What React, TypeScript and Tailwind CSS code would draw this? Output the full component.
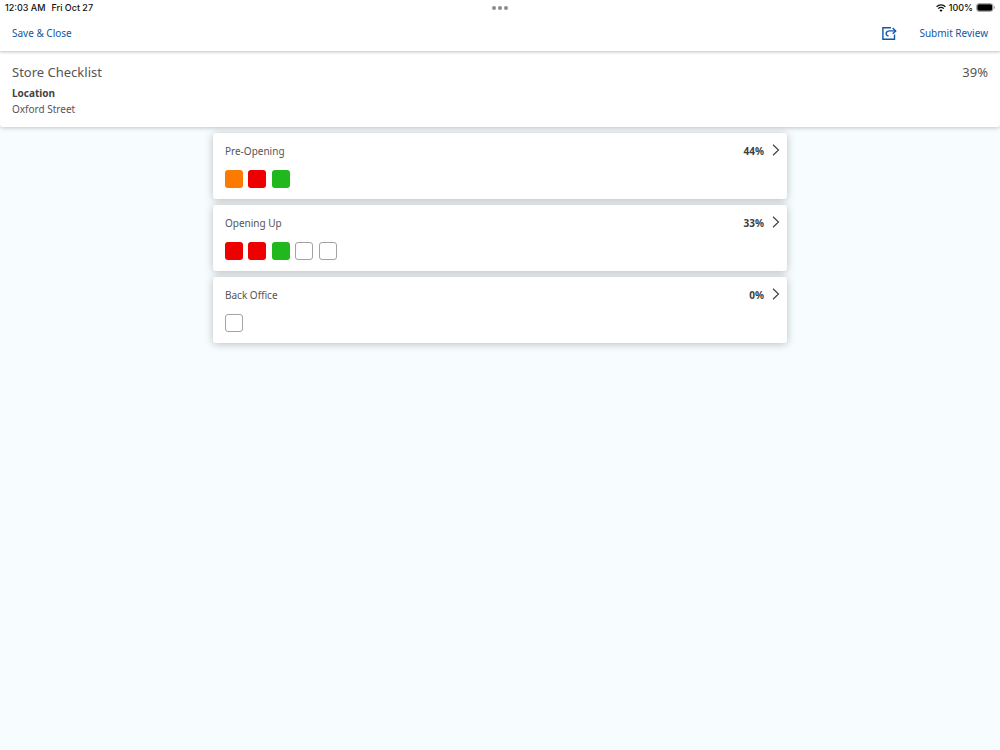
import clsx from 'clsx';

type Answer = 'good' | 'fair' | 'poor' | 'blank';

interface Section {
  title: string;
  score: number;
  answers: Answer[];
}

const sections: Section[] = [
  { title: 'Pre-Opening', score: 44, answers: ['fair', 'poor', 'good'] },
  { title: 'Opening Up', score: 33, answers: ['poor', 'poor', 'good', 'blank', 'blank'] },
  { title: 'Back Office', score: 0, answers: ['blank'] },
];

const answerStyles: Record<Answer, string> = {
  good: 'bg-[#20b81c]',
  fair: 'bg-[#fa7b00]',
  poor: 'bg-[#ee0000]',
  blank: 'border border-[#a3a3a3] bg-white',
};

function StatusBar() {
  return (
    <div className="grid h-[15px] grid-cols-3 items-center px-[5px] font-['Inter',sans-serif] text-[9px] leading-[15px] font-medium text-[#111]">
      <div className="flex gap-1.5">
        <span>12:03 AM</span>
        <span>Fri Oct 27</span>
      </div>
      <div className="flex justify-center gap-0.5">
        <span className="size-1 rounded-full bg-[#8c8c8c]" />
        <span className="size-1 rounded-full bg-[#8c8c8c]" />
        <span className="size-1 rounded-full bg-[#8c8c8c]" />
      </div>
      <div className="flex items-center justify-end gap-[3px]">
        <svg width="10" height="8" viewBox="0 0 10 8" fill="none" stroke="currentColor" aria-hidden="true">
          <path d="M0.6 2.8a6.2 6.2 0 0 1 8.8 0" strokeWidth="1.3" />
          <path d="M2.2 4.6a4 4 0 0 1 5.6 0" strokeWidth="1.3" />
          <path d="M5 7.9 3.5 6.2a2.2 2.2 0 0 1 3 0Z" fill="currentColor" stroke="none" />
        </svg>
        <span>100%</span>
        <svg width="19" height="9" viewBox="0 0 19 9" aria-hidden="true">
          <rect x="0.5" y="0.5" width="16.5" height="8" rx="2.5" fill="none" stroke="#aaa" />
          <rect x="1.3" y="1.3" width="15" height="6.4" rx="1.6" fill="#000" />
          <path d="M18 3v3c.7-.3 1-.9 1-1.5S18.7 3.3 18 3Z" fill="#999" />
        </svg>
      </div>
    </div>
  );
}

function ShareIcon() {
  return (
    <svg
      width="15"
      height="13"
      viewBox="0 0 15 13"
      fill="none"
      stroke="currentColor"
      strokeWidth="1.4"
      aria-hidden="true"
    >
      <path d="M9 0.8H0.9v11.4h11.6V7.6" />
      <path d="M6.6 8.9C4.5 8.7 3.9 7.3 4.2 6 4.600 4.600 5.900 3.900 7.700 3.900h5.800" />
      <path d="m10.700 1.100 3 2.800-3 2.800" />
    </svg>
  );
}

function SectionCard({ title, score, answers }: Section) {
  return (
    <button
      type="button"
      className="block w-full rounded-[3px] bg-white pt-[9px] pr-[7px] pb-[11px] pl-3 text-left shadow-[0_1px_8px_rgba(0,0,0,0.25)]"
    >
      <span className="flex h-[18px] items-center">
        <span className="flex-1">{title}</span>
        <span className="font-bold text-[#3d3d3d]">{score}%</span>
        <svg
          width="8"
          height="12"
          viewBox="0 0 8 12"
          fill="none"
          stroke="#444"
          strokeWidth="1.2"
          className="mb-0.5 ml-2"
          aria-hidden="true"
        >
          <path d="m1 0.8 5.5 5.2L1 11.2" />
        </svg>
      </span>
      <span className="mt-[10px] grid w-[117px] grid-cols-5">
        {answers.map((answer, i) => (
          <span key={i} className={clsx('size-[18px] rounded-[3px]', answerStyles[answer])} />
        ))}
      </span>
    </button>
  );
}

export default function App() {
  return (
    <div className="min-h-screen bg-[#f7fcff] font-['Noto_Sans',sans-serif] text-[10px] leading-4 text-[#555]">
      <header className="relative z-20 bg-white shadow-[0_1px_3px_rgba(0,0,0,0.25)]">
        <StatusBar />
        <nav className="flex h-9 items-center px-3 text-[#0f58a5]">
          <button type="button" className="mr-auto">
            Save &amp; Close
          </button>
          <button type="button" aria-label="Share">
            <ShareIcon />
          </button>
          <button type="button" className="ml-[22px]">
            Submit Review
          </button>
        </nav>
      </header>

      <section className="relative z-10 rounded-b-[3px] bg-white px-3 pt-[11px] pb-[10px] shadow-[0_1px_4px_rgba(0,0,0,0.22)]">
        <div className="flex justify-between text-[13px] leading-5">
          <h1>Store Checklist</h1>
          <span>39%</span>
        </div>
        <h2 className="mt-[3px] font-bold text-[#444]">Location</h2>
        <p>Oxford Street</p>
      </section>

      <main className="mx-auto mt-[6px] flex w-[57.4%] flex-col gap-[6px]">
        {sections.map((section) => (
          <SectionCard key={section.title} {...section} />
        ))}
      </main>
    </div>
  );
}
